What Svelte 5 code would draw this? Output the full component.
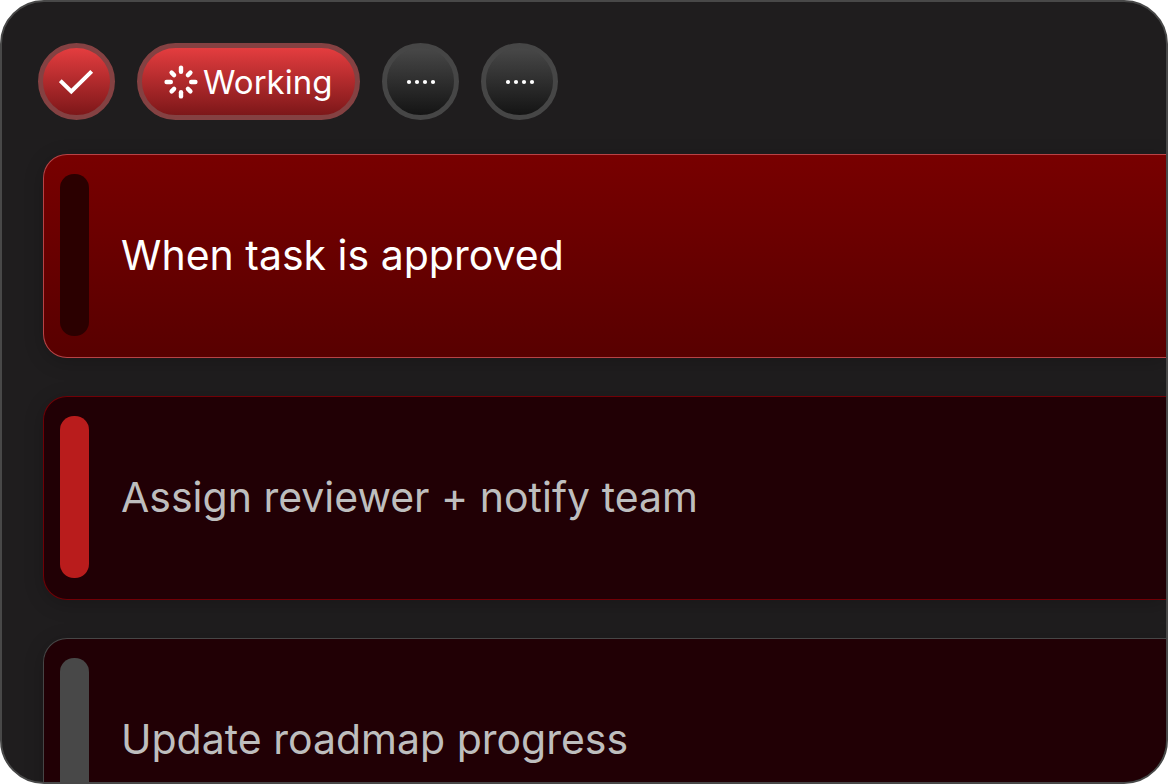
<script>
  const steps = [
    { state: 'done', label: 'Done' },
    { state: 'working', label: 'Working' },
    { state: 'pending', label: 'Pending' },
    { state: 'pending', label: 'Pending' }
  ];
  const tasks = [
    { title: 'When task is approved', tone: 'active' },
    { title: 'Assign reviewer + notify team', tone: 'next' },
    { title: 'Update roadmap progress', tone: 'idle' }
  ];
  const spokes = [0, 45, 90, 135, 180, 225, 270, 315];
</script>

<main class="panel">
  <ol class="steps">
    {#each steps as step}
      <li class="step {step.state}">
        {#if step.state === 'done'}
          <svg width="36" height="36" viewBox="0 0 36 36" role="img" aria-label={step.label}>
            <path d="M1.3 16.7 L12.3 27.4 L32.7 7.4" fill="none" stroke="#fff" stroke-width="4" />
          </svg>
        {:else if step.state === 'working'}
          <svg width="34" height="34" viewBox="-17 -17 34 34" aria-hidden="true">
            {#each spokes as angle}
              <line
                x1="0"
                y1={angle % 90 ? -9.8 : -10.2}
                x2="0"
                y2={angle % 90 ? -13.3 : -14.4}
                transform="rotate({angle})"
                stroke="#fff"
                stroke-width="4.4"
                stroke-linecap="round"
              />
            {/each}
          </svg>
          <span>{step.label}</span>
        {:else}
          <svg width="32" height="8" viewBox="0 0 32 8" role="img" aria-label={step.label}>
            {#each [4, 12, 20, 28] as cx}
              <circle {cx} cy="4" r="2.1" fill="#fff" />
            {/each}
          </svg>
        {/if}
      </li>
    {/each}
  </ol>

  <ul class="tasks">
    {#each tasks as task}
      <li class="task {task.tone}">
        <span class="marker"></span>
        <h2>{task.title}</h2>
      </li>
    {/each}
  </ul>
</main>

<style>
  :global(body) {
    margin: 0;
    background: #fff;
  }

  .panel {
    box-sizing: border-box;
    height: 100vh;
    padding: 41px 0 0 36px;
    overflow: hidden;
    border: 2px solid #484848;
    border-radius: 44px;
    background: #1f1d1e;
    color: #fff;
    font-family: Inter, 'Liberation Sans', sans-serif;
  }

  ol,
  ul {
    margin: 0;
    padding: 0;
    list-style: none;
  }

  .steps {
    display: flex;
    gap: 22px;
  }

  .step {
    display: flex;
    align-items: center;
    justify-content: center;
    box-sizing: border-box;
    min-width: 77px;
    height: 77px;
    border: 5px solid #844142;
    border-radius: 39px;
    background: linear-gradient(#e43d3f, #7d1719);
    font-size: 33px;
    font-weight: 400;
    line-height: 44px;
  }

  .step.working {
    gap: 5px;
    padding: 0 23px 0 22px;
  }

  .step.pending {
    border-color: #464646;
    background: linear-gradient(#484848, #141414);
  }

  .step svg {
    flex: none;
  }

  .tasks {
    display: grid;
    gap: 38px;
    padding: 34px 0 0 5px;
  }

  .task {
    display: flex;
    align-items: center;
    gap: 32px;
    box-sizing: border-box;
    height: 204px;
    padding: 19px 16px 21px;
    border: 1px solid #464646;
    border-right: 0;
    border-radius: 24px 0 0 24px;
    background: #210005;
    box-shadow: 0 4px 20px rgb(0 0 0 / 20%);
    color: #bebebe;
  }

  .task.active {
    border-color: #b84346;
    background: linear-gradient(#780000, #580000);
    color: #fff;
  }

  .task.next {
    border-color: #700006;
  }

  .marker {
    flex: none;
    align-self: stretch;
    width: 29px;
    border-radius: 14px;
    background: #484848;
  }

  .active .marker {
    background: #2b0000;
  }

  .next .marker {
    background: #b91c1c;
  }

  h2 {
    margin: 0;
    font-size: 41px;
    font-weight: 400;
    line-height: 52px;
    white-space: nowrap;
  }
</style>
